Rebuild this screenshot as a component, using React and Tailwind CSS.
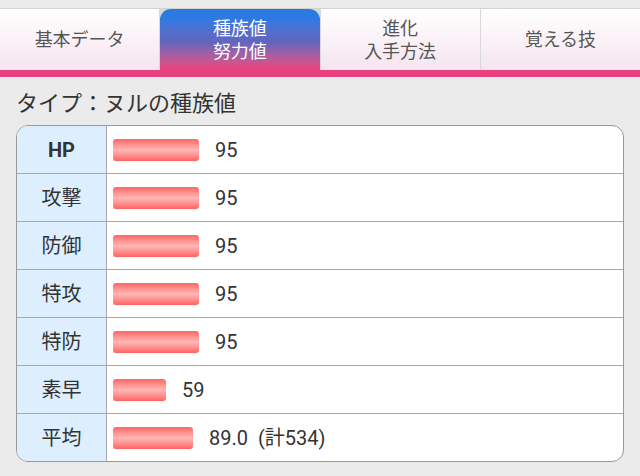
import React from "react";

const stats = [
  { label: "HP", value: 95, bold: true },
  { label: "攻撃", value: 95 },
  { label: "防御", value: 95 },
  { label: "特攻", value: 95 },
  { label: "特防", value: 95 },
  { label: "素早", value: 59 },
  { label: "平均", value: 89, text: "89.0  (計534)" },
];

const tabs = [
  { lines: ["基本データ"] },
  { lines: ["種族値", "努力値"], active: true },
  { lines: ["進化", "入手方法"] },
  { lines: ["覚える技"] },
];

const font = {
  fontFamily: 'Roboto, "Noto Sans CJK JP", sans-serif',
};

const App = () => {
  return (
    <div className="w-[640px] h-[476px] bg-[#ebebeb] overflow-hidden" style={font}>
      <div className="h-[8px]" />
      <div className="border-t border-[#d2d2d2] flex gap-px bg-[#d8d8d8]">
        {tabs.map((tab, i) =>
          tab.active ? (
            <div
              key={i}
              className="flex-1 h-[61px] flex flex-col items-center justify-center rounded-t-[11px] bg-gradient-to-b from-[#2a7ae2] from-[15%] via-[#6464bc] via-[55%] to-[#ee3e7e] text-white text-[18px] leading-[23px]"
            >
              {tab.lines.map((l) => (
                <span key={l}>{l}</span>
              ))}
            </div>
          ) : (
            <div
              key={i}
              className="flex-1 h-[61px] flex flex-col items-center justify-center bg-gradient-to-b from-[#ffffff] to-[#f5e4ee] text-[#555] text-[18px] leading-[23px]"
            >
              {tab.lines.map((l) => (
                <span key={l}>{l}</span>
              ))}
            </div>
          )
        )}
      </div>
      <div className="h-[7px] bg-[#e8417f]" />
      <div className="px-4">
        <h2 className="text-[22px] text-[#333] mt-[13px] leading-[27px] whitespace-pre">
          タイプ：ヌルの種族値
        </h2>
        <div className="mt-[8px] border border-[#999] rounded-[12px] overflow-hidden bg-white">
          {stats.map((s, i) => (
            <div
              key={s.label}
              className={`flex ${i > 0 ? "h-[48px] border-t border-[#a8a8a8]" : "h-[47px]"}`}
            >
              <div
                className={`w-[90px] shrink-0 bg-[#ddeeff] border-r border-[#a8a8a8] flex items-center justify-center text-[20px] text-[#333] ${
                  s.bold ? "font-bold" : ""
                }`}
              >
                {s.label}
              </div>
              <div className="flex items-center pl-[6px] text-[20px] text-[#333]">
                <div
                  className="h-[22px] rounded-[3px] bg-gradient-to-b from-[#ff6464] via-[#ffb6b6] to-[#ff6262]"
                  style={{ width: Math.round(s.value * 0.9) }}
                />
                <span className="ml-[16px] whitespace-pre">{s.text || s.value}</span>
              </div>
            </div>
          ))}
        </div>
      </div>
    </div>
  );
};

export default App;
